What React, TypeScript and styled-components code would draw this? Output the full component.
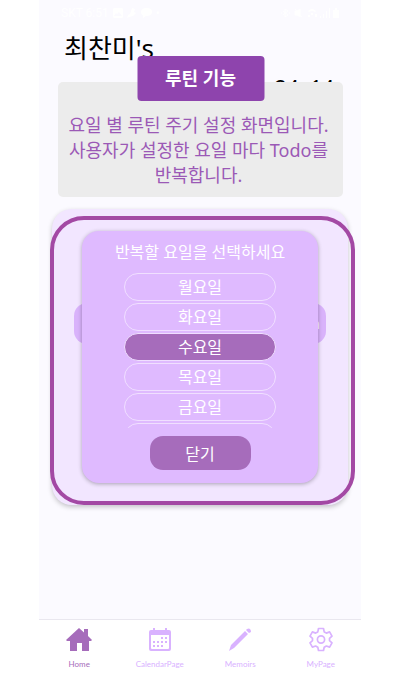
import React, { useState } from "react";
import styled, { createGlobalStyle } from "styled-components";

const GlobalStyle = createGlobalStyle`
  * { box-sizing: border-box; }
  body {
    margin: 0;
    background: #ffffff;
    font-family: "Noto Sans", "Noto Sans CJK KR", sans-serif;
  }
  button { font-family: inherit; border: 0; padding: 0; cursor: pointer; }
`;

const Page = styled.div`
  min-height: 100vh;
  padding: 0 42px 0 39px;
  display: flex;
`;

const Phone = styled.main`
  flex: 1;
  min-width: 0;
  display: flex;
  flex-direction: column;
  background: #fbfaff;
`;

const StatusBar = styled.div`
  display: flex;
  justify-content: space-between;
  align-items: center;
  height: 26px;
  padding: 0 21px 0 22px;
  color: #ffffff;
  font: 12px/26px Roboto, sans-serif;
`;

const StatusGroup = styled.div`
  display: flex;
  align-items: center;
  gap: 4px;
`;

const Owner = styled.h1`
  margin: 0;
  padding: 0 25px;
  color: #000000;
  font-size: 26px;
  font-weight: 400;
  line-height: 44px;
`;

const DateText = styled.div`
  height: 24px;
  margin: 6px 27px -18px;
  text-align: right;
  color: #000000;
  font-size: 21px;
  line-height: 24px;
`;

const Info = styled.section`
  position: relative;
  margin: 0 18px 0 19px;
  padding: 31px 8px 9px 4px;
  border-radius: 5px;
  background: #ececec;
`;

const InfoTitle = styled.h2`
  position: absolute;
  top: -26px;
  left: 50%;
  transform: translateX(-50%);
  width: 127px;
  margin: 0;
  border-radius: 4px;
  background: #8e44ad;
  color: #ffffff;
  font-size: 18px;
  font-weight: 700;
  line-height: 45px;
  text-align: center;
`;

const InfoText = styled.p`
  margin: 0;
  color: #9b59b6;
  font-size: 18px;
  line-height: 25px;
  text-align: center;
  word-break: keep-all;
`;

const Card = styled.section`
  position: relative;
  margin: 12px 13px 0;
  padding: 22px 30px;
  border-radius: 20px;
  background: #f2e6ff;
  box-shadow: 0 2px 5px rgba(0, 0, 0, 0.22);
`;

const Highlight = styled.div`
  position: absolute;
  top: 7px;
  right: -7px;
  bottom: 0;
  left: -2px;
  border: 4px solid #a349a4;
  border-radius: 34px;
  pointer-events: none;
`;

const RoutineButton = styled.button`
  position: absolute;
  top: 94px;
  right: 22px;
  left: 22px;
  height: 41px;
  padding-right: 6px;
  border-radius: 13px;
  background: #d9b2fb;
  color: #ffffff;
  font-size: 14px;
  text-align: right;
`;

const Dialog = styled.div`
  position: relative;
  display: flex;
  flex-direction: column;
  align-items: center;
  padding: 9px 42px 13px;
  border-radius: 17px;
  background: #dfbaff;
  box-shadow: 0 1px 4px rgba(0, 0, 0, 0.3);
  color: #ffffff;
`;

const DialogTitle = styled.h3`
  margin: 0 -30px 9px;
  font-size: 16px;
  font-weight: 400;
  line-height: 24px;
  white-space: nowrap;
`;

const DayList = styled.div`
  align-self: stretch;
  display: flex;
  flex-direction: column;
  gap: 2px;
  height: 155px;
  overflow-y: auto;
  scrollbar-width: none;
`;

const DayButton = styled.button<{ $selected: boolean }>`
  flex: none;
  height: 28px;
  border: 1px solid #f0dfff;
  border-radius: 14px;
  background: ${(p) => (p.$selected ? "#a66cbb" : "transparent")};
  color: #ffffff;
  font-size: 16px;
  font-weight: 400;
  line-height: 24px;
`;

const CloseButton = styled.button`
  width: 101px;
  height: 34px;
  margin-top: 8px;
  border-radius: 13px;
  background: #a66cbb;
  color: #ffffff;
  font-size: 16px;
  font-weight: 400;
`;

const Nav = styled.nav`
  display: grid;
  grid-template-columns: repeat(4, 1fr);
  height: 54px;
  margin-top: auto;
  border-top: 1px solid #e9e7ef;
  background: #ffffff;
`;

const NavLink = styled.a<{ $active?: boolean }>`
  display: flex;
  flex-direction: column;
  align-items: center;
  gap: 7px;
  padding-top: 7px;
  color: ${(p) => (p.$active ? "#a66cbb" : "#d9b2ff")};
  font: 400 8px/10px Lato, sans-serif;
  text-decoration: none;
`;

const HomeIcon = () => (
  <svg width="26" height="25" viewBox="0 0 26 25" fill="currentColor" aria-hidden="true">
    <path d="M13 1 18 5.500V2h4v7l4 4-1 1h-2v10h-7v-8h-5v8H4V14H1l-1-1Z" />
  </svg>
);

const CalendarIcon = () => (
  <svg width="24" height="25" viewBox="0 0 24 25" fill="currentColor" aria-hidden="true">
    <path fillRule="evenodd" d="M5 1h2v2h10V1h2v2h2q2 0 2 2v17q0 2-2 2H3q-2 0-2-2V5q0-2 2-2h2ZM3 8v13q0 1 1 1h16q1 0 1-1V8Z" />
    <path d="M13 10h2v2h-2zM17 10h2v2h-2zM5 14h2v2H5zM9 14h2v2H9zM13 14h2v2h-2zM17 14h2v2h-2zM5 18h2v2H5zM9 18h2v2H9zM13 18h2v2h-2z" />
  </svg>
);

const PencilIcon = () => (
  <svg width="24" height="25" viewBox="0 0 24 25" fill="currentColor" aria-hidden="true">
    <path d="m17 4 3 3L6 21l-5 3 2-6ZM18 3l1-1q2-1 3 0t1 3l-2 1Z" />
  </svg>
);

const GearIcon = () => (
  <svg width="24" height="25" viewBox="0 0 24 25" fill="none" stroke="currentColor" strokeWidth="1.7" strokeLinejoin="round" aria-hidden="true">
    <path d="M9.500 1.500h5l.7 3.400 2.200 1.200 3.200-1.200 2.400 4.300-2.500 2.200v2.200l2.500 2.200-2.400 4.300-3.200-1.100-2.200 1.300-.7 3.200h-5l-.7-3.200-2.200-1.300-3.200 1.100L1 15.800l2.500-2.200v-2.200L1 9.200l2.400-4.300 3.200 1.200 2.200-1.200Z" />
    <circle cx="12" cy="12.500" r="3.600" />
  </svg>
);

const PictureIcon = () => (
  <svg width="10" height="10" viewBox="0 0 10 10" fill="currentColor" aria-hidden="true">
    <path fillRule="evenodd" d="M1 0h8l1 1v8l-1 1H1L0 9V1ZM1 8h8L6 4 4 6 3 5Z" />
  </svg>
);

const LeafIcon = () => (
  <svg width="10" height="10" viewBox="0 0 10 10" fill="currentColor" aria-hidden="true">
    <path d="M5 0 8 1 7 4l2 1-3 3-4 1-2 1 1-3 2-1 1-3Z" />
  </svg>
);

const ChatIcon = () => (
  <svg width="11" height="10" viewBox="0 0 11 10" fill="currentColor" aria-hidden="true">
    <path d="M5.500 0C2 0 0 2 0 4s1 3 2 3.500V10l3-2c3 0 6-1 6-4S9 0 5.500 0Z" />
  </svg>
);

const BluetoothIcon = () => (
  <svg width="9" height="10" viewBox="0 0 9 10" fill="none" stroke="currentColor" aria-hidden="true">
    <path d="m2 3 5 4-3 2V1l3 2-5 4M0 5h1M8 5h1" />
  </svg>
);

const MuteIcon = () => (
  <svg width="9" height="10" viewBox="0 0 9 10" fill="currentColor" stroke="currentColor" aria-hidden="true">
    <path d="M1 3h2l3-2v8L3 7H1ZM1 1l7 8" />
  </svg>
);

const NetworkIcon = () => (
  <svg width="33" height="10" viewBox="0 0 33 10" fill="currentColor" aria-hidden="true">
    <path d="M1 3q4-4 8 0L8 4Q5 2 2 4ZM1 7h2v2H1zM4 5h2v2H4zM8 6h2v3H8zM13 8h1v2h-1zM16 6h1v4h-1zM19 3h1v7h-1zM22 0h1v10h-1zM26 2h2V0h2v2h2v8h-6z" />
  </svg>
);

const days = ["월요일", "화요일", "수요일", "목요일", "금요일", "토요일", "일요일"];

const tabs = [
  { label: "Home", Icon: HomeIcon },
  { label: "CalendarPage", Icon: CalendarIcon },
  { label: "Memoirs", Icon: PencilIcon },
  { label: "MyPage", Icon: GearIcon },
];

export default function App() {
  const [selected, setSelected] = useState("수요일");
  const [open, setOpen] = useState(true);

  return (
    <Page>
      <GlobalStyle />
      <Phone>
        <StatusBar>
          <StatusGroup>
            SKT 6:51 <PictureIcon /> <LeafIcon /> <ChatIcon /> •
          </StatusGroup>
          <StatusGroup>
            <BluetoothIcon /> <MuteIcon /> <NetworkIcon />
          </StatusGroup>
        </StatusBar>
        <Owner>최찬미's</Owner>
        <DateText>24. 14</DateText>
        <Info>
          <InfoTitle>루틴 기능</InfoTitle>
          <InfoText>
            요일 별 루틴 주기 설정 화면입니다. 사용자가 설정한 요일 마다 Todo를 반복합니다.
          </InfoText>
        </Info>
        <Card>
          <RoutineButton type="button" onClick={() => setOpen(true)}>n</RoutineButton>
          {open && (
            <Dialog role="dialog" aria-labelledby="day-title">
              <DialogTitle id="day-title">반복할 요일을 선택하세요</DialogTitle>
              <DayList>
                {days.map((day) => (
                  <DayButton
                    key={day}
                    type="button"
                    $selected={day === selected}
                    aria-pressed={day === selected}
                    onClick={() => setSelected(day)}
                  >
                    {day}
                  </DayButton>
                ))}
              </DayList>
              <CloseButton type="button" onClick={() => setOpen(false)}>닫기</CloseButton>
            </Dialog>
          )}
          <Highlight />
        </Card>
        <Nav>
          {tabs.map(({ label, Icon }, i) => (
            <NavLink key={label} href={`#${label}`} $active={i === 0}>
              <Icon />
              {label}
            </NavLink>
          ))}
        </Nav>
      </Phone>
    </Page>
  );
}
